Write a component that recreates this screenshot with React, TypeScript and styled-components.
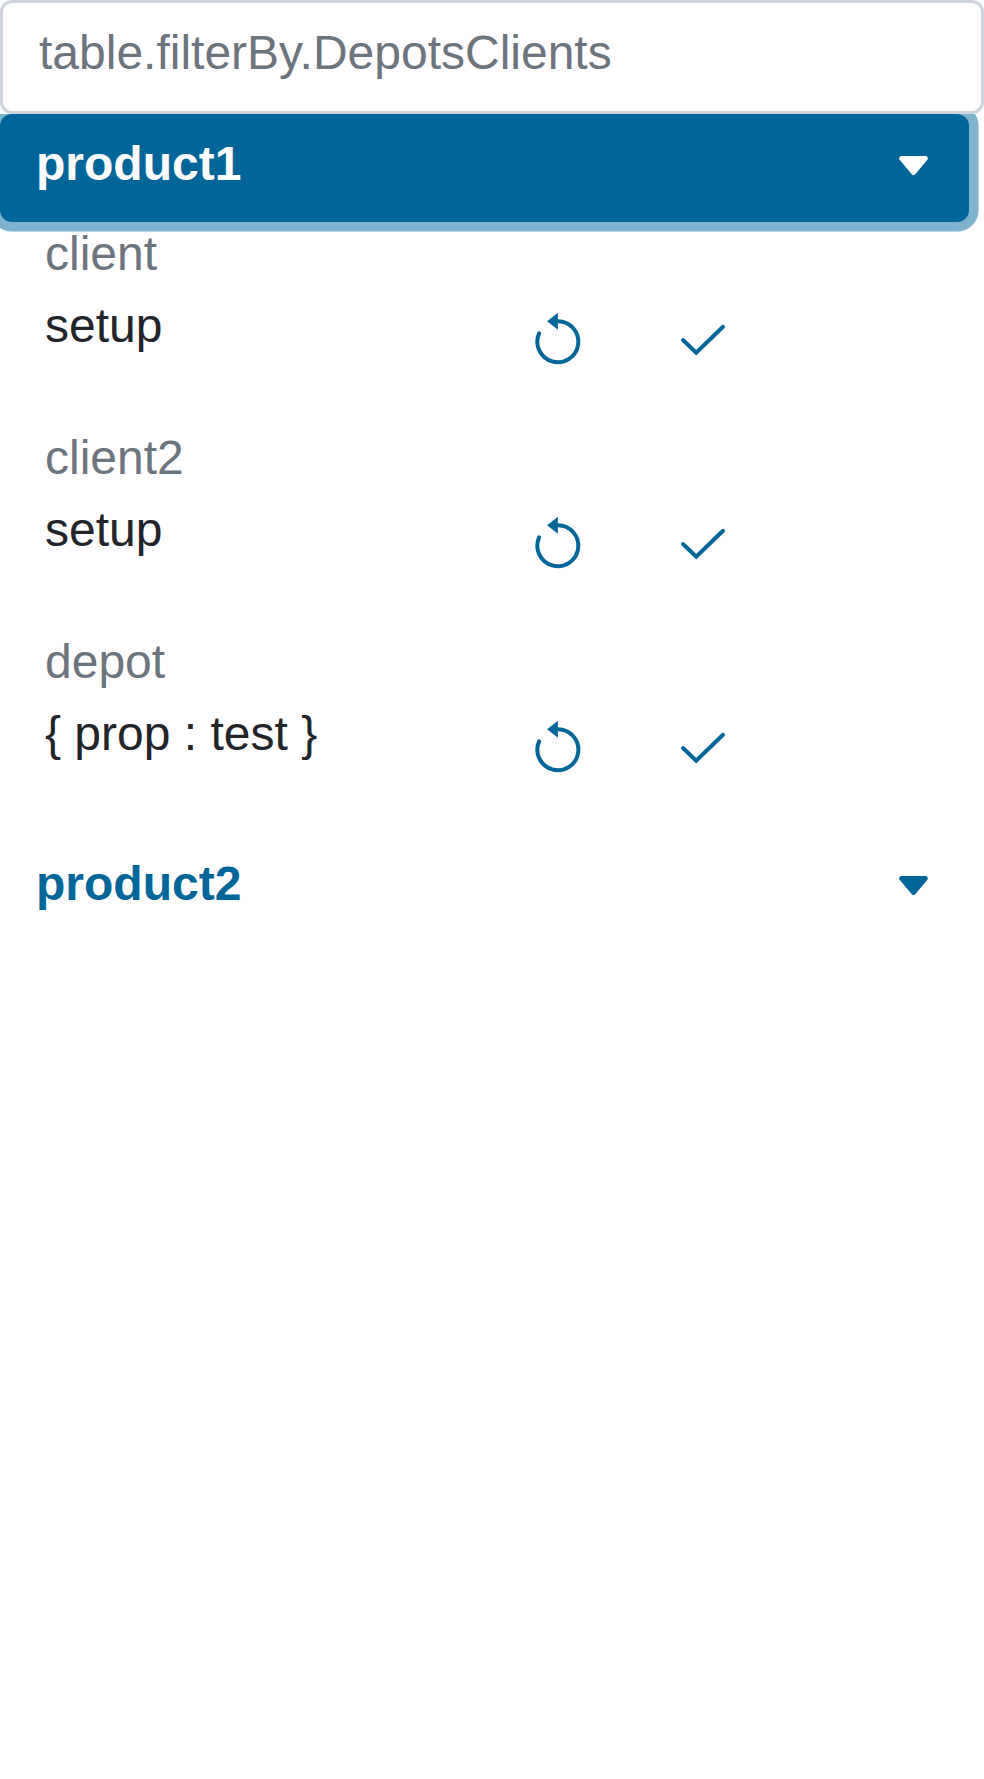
import React from "react";
import styled, { createGlobalStyle } from "styled-components";

const GlobalStyle = createGlobalStyle`
  *, *::before, *::after { box-sizing: border-box; }
  body {
    margin: 0;
    background: #fff;
    color: #212529;
    font: 400 48px/64px "Liberation Sans", Arial, sans-serif;
  }
`;

const Page = styled.main`
  display: flex;
  flex-direction: column;
  width: 984px;
`;

const ProductList = styled.div`
  overflow: hidden;
`;

const FilterInput = styled.input`
  width: 100%;
  height: 114px;
  padding: 17px 36px 27px;
  border: 3px solid #ced4da;
  border-radius: 12px;
  background: #fff;
  color: #495057;
  font: inherit;
  outline: none;
  &::placeholder { color: #6c757d; opacity: 1; }
`;

const ProductButton = styled.button<{ $active?: boolean }>`
  display: flex;
  align-items: flex-start;
  justify-content: space-between;
  width: 969px;
  height: 108px;
  padding: 18px 36px;
  border: 0;
  border-radius: 12px;
  background: ${(p) => (p.$active ? "#006699" : "transparent")};
  box-shadow: ${(p) => (p.$active ? "0 0 0 9.6px rgba(0, 102, 153, 0.5)" : "none")};
  color: ${(p) => (p.$active ? "#fff" : "#006699")};
  font: inherit;
  font-weight: 700;
  text-align: left;
`;

const Caret = styled.svg`
  width: 39px;
  height: 72px;
  flex: none;
`;

const Item = styled.section`
  height: 204px;
  padding-left: 45px;
`;

const Label = styled.div`
  height: 72px;
  color: #6c757d;
`;

const Setup = styled.div`
  display: grid;
  grid-template-columns: 468px 145px 145px;
  height: 132px;
`;

const IconButton = styled.button`
  display: flex;
  width: 90px;
  height: 96px;
  padding: 12px 9px;
  border: 0;
  background: transparent;
  color: #006699;
`;

const Icon = styled.svg`
  width: 72px;
  height: 72px;
  fill: none;
  stroke: currentColor;
  stroke-width: 4;
  stroke-linecap: round;
`;

const ResetIcon = () => (
  <Icon viewBox="0 0 72 72" aria-hidden="true">
    <path d="M17.1 27.4A20.5 20.5 0 1 0 35.8 15.2" />
    <path d="M35.9 6.8v16.9l-10.8-8.4z" fill="currentColor" stroke="none" />
  </Icon>
);

const CheckIcon = () => (
  <Icon viewBox="0 0 72 72" aria-hidden="true">
    <path d="M16 34 29.2 46.7 56 20.8" />
  </Icon>
);

const Product = ({ name, active }: { name: string; active?: boolean }) => (
  <ProductButton $active={active}>
    <span>{name}</span>
    <Caret viewBox="0 0 39 72" aria-hidden="true">
      <path
        d="M7.6 24h23.8c2.1 0 3.2 2.5 1.8 4L21 42.4q-1.5 1.6-3 0L5.8 28c-1.4-1.5-.3-4 1.8-4z"
        fill="currentColor"
      />
    </Caret>
  </ProductButton>
);

const entries = [
  { label: "client", value: "setup" },
  { label: "client2", value: "setup" },
  { label: "depot", value: "{ prop : test }" },
];

export default function App() {
  return (
    <>
      <GlobalStyle />
      <Page>
        <FilterInput placeholder="table.filterBy.DepotsClients" />
        <ProductList>
          <Product name="product1" active />
          {entries.map((entry) => (
            <Item key={entry.label}>
              <Label>{entry.label}</Label>
              <Setup>
                <span>{entry.value}</span>
                <IconButton aria-label="Reset"><ResetIcon /></IconButton>
                <IconButton aria-label="Confirm"><CheckIcon /></IconButton>
              </Setup>
            </Item>
          ))}
          <Product name="product2" />
        </ProductList>
      </Page>
    </>
  );
}
